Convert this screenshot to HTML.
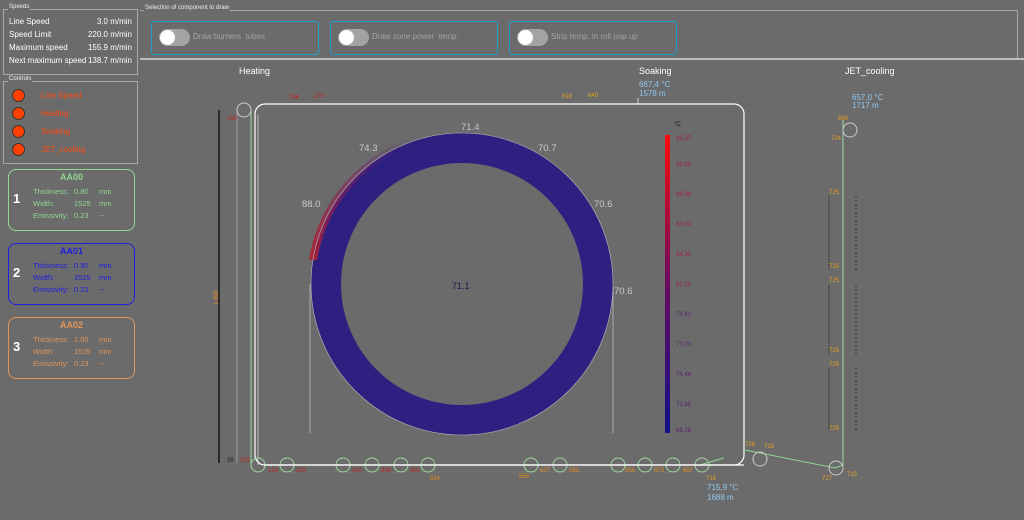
<!DOCTYPE html>
<html><head><meta charset="utf-8"><style>
body{margin:0;width:1024px;height:520px;background:#6b6b6b;font-family:"Liberation Sans",sans-serif;overflow:hidden;position:relative;color:#fff}
.abs{position:absolute}
.gb{position:absolute;border:1px solid #a8a8a8;}
.gt{position:absolute;top:-6px;left:4px;background:#6b6b6b;font-size:6px;color:#eee;padding:0 1px}
.row{position:absolute;left:5px;right:5px;font-size:8px;color:#fff}
.row span{position:absolute;right:0}
.led{position:absolute;left:8px;width:11px;height:11px;border-radius:50%;background:#ff4000;border:1px solid #333}
.ctl{position:absolute;left:37px;font-size:8px;color:#ff4a10}
.card{position:absolute;left:8px;width:125px;height:60px;border:1px solid;border-radius:8px}
.card .t{position:absolute;top:2px;width:100%;text-align:center;font-size:9px;font-weight:bold}
.card .n{position:absolute;left:4px;top:21px;font-size:13px;font-weight:bold;color:#fff}
.card .l{position:absolute;font-size:7.5px}
.btn{position:absolute;top:21px;height:32px;border:1px solid #1e9fd0;border-radius:3px}
.tg{position:absolute;left:7px;top:7px;width:31px;height:17px;border-radius:9px;background:#a3a3a3}
.tg:before{content:"";position:absolute;left:1px;top:1px;width:15px;height:15px;border-radius:50%;background:#fff}
.btn span{position:absolute;left:41px;top:10px;font-size:8px;color:#a3a3a3}
</style></head><body>
<div class="gb" style="left:3px;top:9px;width:133px;height:64px"><div class="gt">Speeds</div>
<div class="row" style="top:7px">Line Speed<span>3.0 m/min</span></div>
<div class="row" style="top:20px">Speed Limit<span>220.0 m/min</span></div>
<div class="row" style="top:33px">Maximum speed<span>155.9 m/min</span></div>
<div class="row" style="top:46px">Next maximum speed<span>138.7 m/min</span></div></div>
<div class="gb" style="left:3px;top:81px;width:133px;height:81px"><div class="gt">Controls</div>
<div class="led" style="top:7px"></div><div class="ctl" style="top:9px">Line Speed</div>
<div class="led" style="top:25px"></div><div class="ctl" style="top:27px">Heating</div>
<div class="led" style="top:43px"></div><div class="ctl" style="top:45px">Soaking</div>
<div class="led" style="top:61px"></div><div class="ctl" style="top:63px">JET_cooling</div></div>
<div class="card" style="top:169px;border-color:#8fd88f;color:#8fd88f"><div class="t">AA00</div><div class="n">1</div>
<div class="l" style="left:24px;top:17px">Thickness:</div><div class="l" style="left:65px;top:17px">0.80</div><div class="l" style="left:90px;top:17px">mm</div>
<div class="l" style="left:24px;top:29px">Width:</div><div class="l" style="left:65px;top:29px">1525</div><div class="l" style="left:90px;top:29px">mm</div>
<div class="l" style="left:24px;top:41px">Emissivity:</div><div class="l" style="left:65px;top:41px">0.23</div><div class="l" style="left:90px;top:41px">--</div></div>
<div class="card" style="top:243px;border-color:#2020e0;color:#2020e0"><div class="t">AA01</div><div class="n">2</div>
<div class="l" style="left:24px;top:17px">Thickness:</div><div class="l" style="left:65px;top:17px">0.90</div><div class="l" style="left:90px;top:17px">mm</div>
<div class="l" style="left:24px;top:29px">Width:</div><div class="l" style="left:65px;top:29px">1525</div><div class="l" style="left:90px;top:29px">mm</div>
<div class="l" style="left:24px;top:41px">Emissivity:</div><div class="l" style="left:65px;top:41px">0.23</div><div class="l" style="left:90px;top:41px">--</div></div>
<div class="card" style="top:317px;border-color:#e0955a;color:#e0955a"><div class="t">AA02</div><div class="n">3</div>
<div class="l" style="left:24px;top:17px">Thickness:</div><div class="l" style="left:65px;top:17px">1.00</div><div class="l" style="left:90px;top:17px">mm</div>
<div class="l" style="left:24px;top:29px">Width:</div><div class="l" style="left:65px;top:29px">1525</div><div class="l" style="left:90px;top:29px">mm</div>
<div class="l" style="left:24px;top:41px">Emissivity:</div><div class="l" style="left:65px;top:41px">0.23</div><div class="l" style="left:90px;top:41px">--</div></div>

<div class="abs" style="left:140px;top:10px;width:878px;border-top:1px solid #a8a8a8"></div>
<div class="abs" style="left:144px;top:5px;font-size:6px;background:#6b6b6b;color:#eee;padding:0 1px">Selection of component to draw</div>
<div class="abs" style="left:1017px;top:10px;height:48px;border-left:1px solid #a8a8a8"></div>
<div class="abs" style="left:140px;top:58px;width:884px;border-top:2px solid #bdbdbd"></div>
<div class="btn" style="left:151px;width:166px"><div class="tg"></div><span>Draw burners&nbsp; tubes</span></div>
<div class="btn" style="left:330px;width:166px"><div class="tg"></div><span>Draw zone power&nbsp; temp.</span></div>
<div class="btn" style="left:509px;width:166px"><div class="tg"></div><span>Strip temp. in roll pop up</span></div>

<svg class="abs" style="left:0;top:0" width="1024" height="520" font-family="Liberation Sans, sans-serif">
<defs>
<linearGradient id="cb" x1="0" y1="1" x2="0" y2="0"><stop offset="0" stop-color="#10108a"/><stop offset=".5" stop-color="#6a0a60"/><stop offset="1" stop-color="#ff0a0a"/></linearGradient>
<linearGradient id="hot" x1="0" y1="1" x2="1" y2="0"><stop offset="0" stop-color="#b02030" stop-opacity=".9"/><stop offset=".6" stop-color="#7a2060" stop-opacity=".4"/><stop offset="1" stop-color="#2d2078" stop-opacity="0"/></linearGradient>
</defs>
<g fill="#fff" font-size="9">
<text x="239" y="74">Heating</text><text x="639" y="74">Soaking</text><text x="845" y="74">JET_cooling</text></g>
<g fill="#8fc8f0" font-size="8"><text x="639" y="87">667,4 °C</text><text x="639" y="96">1578 m</text>
<text x="852" y="100">657,0 °C</text><text x="852" y="108">1717 m</text>
<text x="707" y="490">715,9 °C</text><text x="707" y="500">1688 m</text></g>
<line x1="638" y1="98" x2="638" y2="104" stroke="#ccc"/>
<line x1="219" y1="110" x2="219" y2="463" stroke="#000" stroke-width="1.2"/>
<line x1="237" y1="110" x2="237" y2="463" stroke="#999"/>
<line x1="251" y1="110" x2="251" y2="463" stroke="#9ed89e"/>
<line x1="258" y1="115" x2="258" y2="465" stroke="#bbb"/>
<rect x="255" y="104" width="489" height="361" rx="10" fill="none" stroke="#fff" stroke-width="1.2"/>
<line x1="310" y1="284" x2="310" y2="433" stroke="#aaa"/><line x1="613" y1="284" x2="613" y2="433" stroke="#aaa"/>
<circle cx="462" cy="284" r="136" fill="none" stroke="#2e2080" stroke-width="30"/>
<path d="M313,260 A151,151 0 0 1 420,139" fill="none" stroke="url(#hot)" stroke-width="8"/>
<circle cx="462" cy="284" r="151" fill="none" stroke="#bbb" stroke-width=".6"/>
<g fill="#c8c8c8" font-size="9.5"><text x="461" y="130">71.4</text><text x="359" y="151">74.3</text><text x="538" y="151">70.7</text><text x="302" y="207">88.0</text><text x="594" y="207">70.6</text><text x="614" y="294">70.6</text></g>
<text x="452" y="289" font-size="9" fill="#1a1a50">71.1</text>
<rect x="665" y="135" width="5" height="298" fill="url(#cb)"/>
<text x="674" y="126" font-size="6" fill="#111">°C</text>
<g font-size="6" fill="#a02040"><text x="676" y="140">95.17</text><text x="676" y="166">92.58</text><text x="676" y="196">89.99</text><text x="676" y="226">87.00</text><text x="676" y="256">84.31</text><text x="676" y="286">82.21</text></g>
<g font-size="6" fill="#5a2070"><text x="676" y="316">79.62</text><text x="676" y="346">77.03</text><text x="676" y="376">74.44</text><text x="676" y="406">71.85</text><text x="676" y="432">69.26</text></g>
<line x1="843" y1="120" x2="843" y2="465" stroke="#9ed89e"/>
<circle cx="850" cy="130" r="7" fill="none" stroke="#ccc"/>
<g stroke="#222" stroke-dasharray="1,1"><line x1="829" y1="196" x2="829" y2="270"/><line x1="829" y1="285" x2="829" y2="355"/><line x1="829" y1="368" x2="829" y2="430"/></g>
<g stroke="#333" stroke-dasharray="2,2"><line x1="856" y1="196" x2="856" y2="270"/><line x1="856" y1="285" x2="856" y2="355"/><line x1="856" y1="368" x2="856" y2="430"/></g>
<g font-size="6" fill="#e8a020"><text x="831" y="140">724</text><text x="829" y="194">725</text><text x="829" y="268">725</text><text x="829" y="282">725</text><text x="829" y="352">725</text><text x="829" y="366">725</text><text x="829" y="430">725</text><text x="838" y="120">656</text>
<text x="745" y="446">728</text><text x="764" y="448">716</text><text x="822" y="480">727</text><text x="847" y="476">715</text><text x="706" y="480">716</text>
<text x="562" y="98">618</text><text x="588" y="97">640</text></g>
<polyline points="744,450 755,452 835,468 843,465" fill="none" stroke="#8fd88f"/>
<line x1="700" y1="465" x2="724" y2="458" stroke="#8fd88f"/>
<circle cx="760" cy="459" r="7" fill="none" stroke="#ccc"/><circle cx="836" cy="468" r="7" fill="none" stroke="#ccc"/>
<circle cx="244" cy="110" r="7" fill="none" stroke="#ccc"/>
<line x1="264" y1="472" x2="700" y2="472" stroke="#7a8a7a" stroke-width=".6"/>
<g fill="none" stroke="#9ed89e">
<circle cx="258" cy="465" r="7"/><circle cx="287" cy="465" r="7"/><circle cx="343" cy="465" r="7"/><circle cx="372" cy="465" r="7"/><circle cx="401" cy="465" r="7"/><circle cx="428" cy="465" r="7"/><circle cx="531" cy="465" r="7"/><circle cx="560" cy="465" r="7"/><circle cx="618" cy="465" r="7"/><circle cx="645" cy="465" r="7"/><circle cx="673" cy="465" r="7"/><circle cx="702" cy="465" r="7"/></g>
<line x1="264" y1="465" x2="744" y2="465" stroke="#fff" stroke-width="1.2"/>
<g font-size="6" fill="#c02020"><text x="289" y="99">256</text><text x="314" y="98">270</text><text x="227" y="120">150</text><text x="268" y="472">124</text><text x="296" y="472">225</text><text x="352" y="472">310</text><text x="381" y="472">306</text><text x="410" y="472">401</text><text x="240" y="462">207</text></g>
<text x="227" y="462" font-size="6" fill="#222">39</text>
<g font-size="6" fill="#e88a20"><text x="430" y="480">534</text><text x="519" y="478">556</text><text x="540" y="472">627</text><text x="569" y="472">593</text><text x="625" y="472">654</text><text x="654" y="472">673</text><text x="683" y="472">697</text></g>
<text x="218" y="305" font-size="6" fill="#e88a20" transform="rotate(-90 218 305)">1 800</text>
</svg>
</body></html>
